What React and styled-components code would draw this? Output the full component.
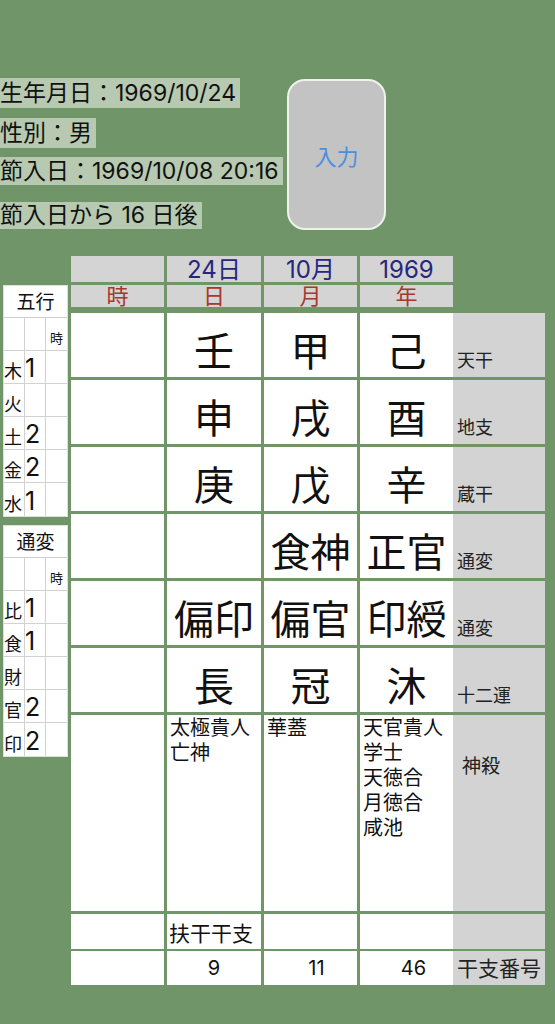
import styled, { createGlobalStyle } from "styled-components"

const GlobalStyle = createGlobalStyle`
  body {
    margin: 0;
    background: #6f9568;
  }
`

const Page = styled.div`
  width: 555px;
  min-height: 1024px;
  background: #6f9568;
  font-family: Inter, "Noto Sans CJK JP", sans-serif;
  color: #111;
`

const Top = styled.div`
  display: flex;
  height: 256px;
  padding-top: 78px;
  box-sizing: border-box;
`

const Info = styled.div`
  width: 287px;
  display: flex;
  flex-direction: column;
  align-items: flex-start;
`

const InfoLine = styled.div`
  background: #b7c9b0;
  font-size: 23px;
  line-height: ${({ $h }) => $h}px;
  margin-top: ${({ $mt }) => $mt}px;
  padding-right: 4px;
  white-space: nowrap;
`

const InputButton = styled.button`
  width: 99px;
  height: 151px;
  margin-top: 1px;
  background: #c3c3c3;
  border: 2px solid #eef3ea;
  border-radius: 18px;
  color: #4a8fe0;
  font-family: inherit;
  font-size: 22px;
  padding: 0;
`

const Bottom = styled.div`
  display: flex;
  gap: 3px;
  padding-left: 3px;
`

const Side = styled.div`
  width: 65px;
  padding-top: 29px;
  display: flex;
  flex-direction: column;
  gap: 8px;
`

const Tally = styled.div`
  background: #fff;
  border: 1px solid #dbe3d7;
`

const TallyTitle = styled.div`
  height: 32px;
  line-height: 34px;
  text-align: center;
  font-size: 19px;
  border-bottom: 1px solid #cfcfcf;
  box-sizing: border-box;
`

const TallyGrid = styled.div`
  display: grid;
  grid-template-columns: 21px 21px 1fr;
  grid-auto-rows: 33px;
`

const TallyCell = styled.div`
  display: flex;
  align-items: flex-end;
  justify-content: ${({ $center }) => ($center ? "center" : "flex-start")};
  border-right: ${({ $last }) => ($last ? "none" : "1px solid #d2d2d2")};
  border-bottom: ${({ $bottom }) => ($bottom ? "none" : "1px solid #d2d2d2")};
  box-sizing: border-box;
  font-size: ${({ $size }) => $size}px;
  line-height: 1;
  padding-bottom: ${({ $pb }) => $pb}px;
  overflow: visible;
  white-space: nowrap;
`

const Board = styled.div`
  display: flex;
  flex-direction: column;
`

const Row = styled.div`
  display: flex;
  gap: 3px;
  height: ${({ $h }) => $h}px;
  margin-bottom: ${({ $mb }) => $mb}px;
`

const HeadCell = styled.div`
  width: ${({ $w }) => $w}px;
  background: #d4d4d4;
  text-align: center;
  font-size: ${({ $size }) => $size}px;
  line-height: ${({ $size }) => $size}px;
  padding-top: ${({ $pt }) => $pt}px;
  box-sizing: border-box;
  color: ${({ $color }) => $color};
  white-space: nowrap;
`

const Cell = styled.div`
  width: ${({ $w }) => $w}px;
  background: #fff;
  box-sizing: border-box;
  display: flex;
  justify-content: center;
  align-items: flex-end;
  padding-bottom: 5px;
  font-size: 40px;
  line-height: 40px;
  white-space: nowrap;
`

const ListCell = styled.div`
  width: ${({ $w }) => $w}px;
  background: #fff;
  box-sizing: border-box;
  padding: 1px 0 0 3px;
  font-size: 20px;
  line-height: 25px;
`

const SmallCell = styled.div`
  width: ${({ $w }) => $w}px;
  background: #fff;
  box-sizing: border-box;
  display: flex;
  align-items: center;
  justify-content: ${({ $left }) => ($left ? "flex-start" : "center")};
  padding-left: ${({ $pl }) => $pl || 0}px;
  font-size: ${({ $size }) => $size}px;
  white-space: nowrap;
`

const Pair = styled.div`
  display: flex;
`

const Label = styled.div`
  width: 92px;
  background: #d3d3d3;
  box-sizing: border-box;
  display: flex;
  align-items: ${({ $align }) => $align};
  padding: ${({ $pad }) => $pad};
  font-size: ${({ $size }) => $size}px;
  line-height: 1;
  color: #222;
  white-space: nowrap;
`

const W = [93, 94, 93, 93]

const gogyo = [["木", "1"], ["火", ""], ["土", "2"], ["金", "2"], ["水", "1"]]
const tsuhen = [["比", "1"], ["食", "1"], ["財", ""], ["官", "2"], ["印", "2"]]

const bigRows = [
  { v: ["壬", "甲", "己"], label: "天干" },
  { v: ["申", "戌", "酉"], label: "地支" },
  { v: ["庚", "戊", "辛"], label: "蔵干" },
  { v: ["", "食神", "正官"], label: "通変" },
  { v: ["偏印", "偏官", "印綬"], label: "通変" },
  { v: ["長", "冠", "沐"], label: "十二運" },
]

const shensha = [["太極貴人", "亡神"], ["華蓋"], ["天官貴人", "学士", "天徳合", "月徳合", "咸池"]]

function TallyTable({ title, rows }) {
  return (
    <Tally>
      <TallyTitle>{title}</TallyTitle>
      <TallyGrid>
        <TallyCell $pb={0} />
        <TallyCell $pb={0} />
        <TallyCell $last $center $size={13} $pb={5}>時</TallyCell>
        {rows.map(([k, n], i) => {
          const bottom = i === rows.length - 1
          return [
            <TallyCell key={k + "a"} $bottom={bottom} $size={18} $pb={2}>{k}</TallyCell>,
            <TallyCell key={k + "b"} $bottom={bottom} $size={25} $pb={2}>{n}</TallyCell>,
            <TallyCell key={k + "c"} $bottom={bottom} $last />,
          ]
        })}
      </TallyGrid>
    </Tally>
  )
}

export default function App() {
  return (
    <Page>
      <GlobalStyle />
      <Top>
        <Info>
          <InfoLine $h={30} $mt={0}>生年月日：1969/10/24</InfoLine>
          <InfoLine $h={30} $mt={10}>性別：男</InfoLine>
          <InfoLine $h={28} $mt={9}>節入日：1969/10/08 20:16</InfoLine>
          <InfoLine $h={27} $mt={17}>節入日から 16 日後</InfoLine>
        </Info>
        <InputButton>入力</InputButton>
      </Top>
      <Bottom>
        <Side>
          <TallyTable title="五行" rows={gogyo} />
          <TallyTable title="通変" rows={tsuhen} />
        </Side>
        <Board>
          <Row $h={26} $mb={3}>
            {["", "24日", "10月", "1969"].map((t, i) => (
              <HeadCell key={i} $w={W[i]} $size={24} $pt={2} $color="#26267f">{t}</HeadCell>
            ))}
          </Row>
          <Row $h={22} $mb={6}>
            {["時", "日", "月", "年"].map((t, i) => (
              <HeadCell key={i} $w={W[i]} $size={22} $pt={0} $color="#a8372c">{t}</HeadCell>
            ))}
          </Row>
          {bigRows.map((r, ri) => (
            <Row key={ri} $h={64} $mb={3}>
              <Cell $w={W[0]} />
              <Cell $w={W[1]}>{r.v[0]}</Cell>
              <Cell $w={W[2]}>{r.v[1]}</Cell>
              <Pair>
                <Cell $w={W[3]}>{r.v[2]}</Cell>
                <Label $align="flex-end" $pad="0 0 7px 4px" $size={18}>{r.label}</Label>
              </Pair>
            </Row>
          ))}
          <Row $h={196} $mb={3}>
            <ListCell $w={W[0]} />
            {shensha.slice(0, 2).map((list, i) => (
              <ListCell key={i} $w={W[i + 1]}>
                {list.map((t) => <div key={t}>{t}</div>)}
              </ListCell>
            ))}
            <Pair>
              <ListCell $w={W[3]}>
                {shensha[2].map((t) => <div key={t}>{t}</div>)}
              </ListCell>
              <Label $align="flex-start" $pad="42px 0 0 9px" $size={19}>神殺</Label>
            </Pair>
          </Row>
          <Row $h={35} $mb={2}>
            <SmallCell $w={W[0]} />
            <SmallCell $w={W[1]} $left $pl={2} $size={21}>扶干干支</SmallCell>
            <SmallCell $w={W[2]} />
            <Pair>
              <SmallCell $w={W[3]} />
              <Label $align="center" $pad="0" $size={18} />
            </Pair>
          </Row>
          <Row $h={34} $mb={0}>
            <SmallCell $w={W[0]} />
            <SmallCell $w={W[1]} $size={20}>9</SmallCell>
            <SmallCell $w={W[2]} $pl={12} $size={20}>11</SmallCell>
            <Pair>
              <SmallCell $w={W[3]} $pl={14} $size={20}>46</SmallCell>
              <Label $align="center" $pad="0 0 0 4px" $size={21}>干支番号</Label>
            </Pair>
          </Row>
        </Board>
      </Bottom>
    </Page>
  )
}
